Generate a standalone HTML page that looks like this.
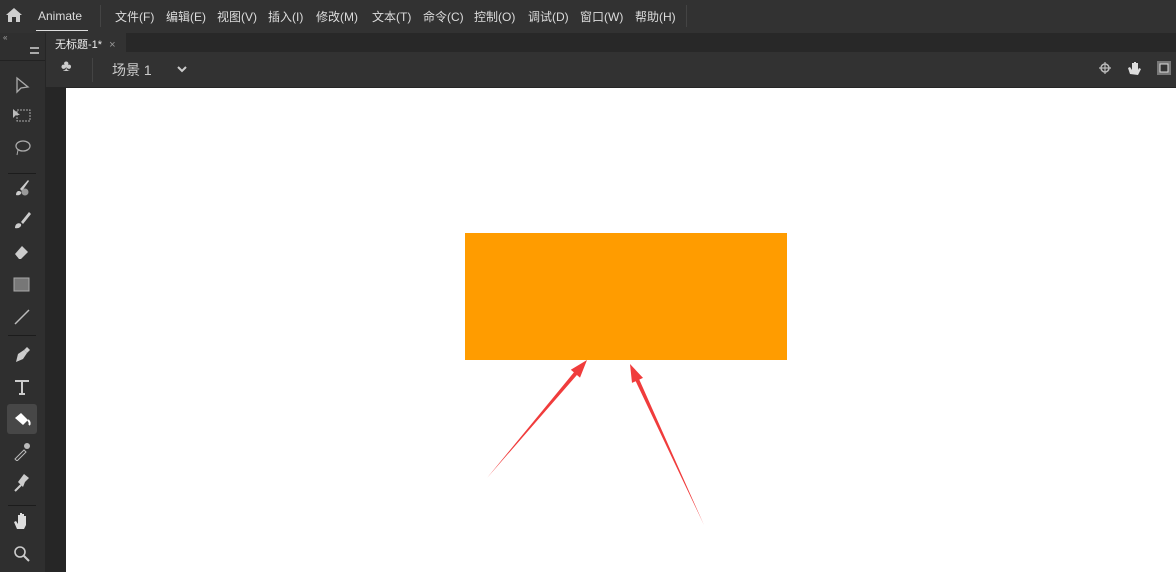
<!DOCTYPE html>
<html><head><meta charset="utf-8"><style>
*{margin:0;padding:0;box-sizing:border-box}
body{width:1176px;height:572px;overflow:hidden;background:#262626;font-family:"Liberation Sans","Noto Sans CJK SC",sans-serif;position:relative;color:#ddd}
.menu{position:absolute;left:0;top:0;width:1176px;height:33px;background:#323232;font-size:12px}
.menu span{position:absolute;top:8px;color:#dcdcdc}
.tabs{position:absolute;left:46px;top:33px;width:1130px;height:19px;background:#282828}
.tab{position:absolute;left:0;top:0;width:80px;height:19px;background:#323232;font-size:11px;color:#eee;padding:3px 9px}
.scene{position:absolute;left:46px;top:52px;width:1130px;height:35px;background:#323232}
.left{position:absolute;left:0;top:33px;width:45px;height:539px;background:#2f2f2f}
.stage{position:absolute;left:66px;top:88px;width:1110px;height:484px;background:#fff}
.ic{position:absolute;left:12px;width:20px;height:20px}
.sep{position:absolute;left:8px;width:28px;height:1px;background:#1c1c1c}
</style></head><body>
<div class="menu">
<svg style="position:absolute;left:5px;top:7px" width="18" height="16" viewBox="0 0 18 16"><path d="M9 1L1 8h2v7h4v-5h4v5h4V8h2z" fill="#cfcfcf"/></svg>
<span style="left:38px;top:9px">Animate</span>
<div style="position:absolute;left:36px;top:30px;width:52px;height:1px;background:#ddd"></div>
<div style="position:absolute;left:100px;top:5px;width:1px;height:22px;background:#444"></div>
<span style="left:115px">文件(F)</span><span style="left:166px">编辑(E)</span><span style="left:217px">视图(V)</span><span style="left:268px">插入(I)</span><span style="left:316px">修改(M)</span><span style="left:372px">文本(T)</span><span style="left:423px">命令(C)</span><span style="left:474px">控制(O)</span><span style="left:528px">调试(D)</span><span style="left:580px">窗口(W)</span><span style="left:635px">帮助(H)</span>
<div style="position:absolute;left:686px;top:5px;width:1px;height:22px;background:#444"></div>
</div>
<div class="tabs"><div class="tab">无标题-1* <span style="color:#999;margin-left:4px">×</span></div></div>
<div class="scene">
<span style="position:absolute;left:15px;top:6px;font-size:16px;color:#ccc">♣</span>
<div style="position:absolute;left:46px;top:6px;width:1px;height:24px;background:#444"></div>
<span style="position:absolute;left:66px;top:8px;font-size:14px;color:#ccc">场景 1</span>
<svg style="position:absolute;left:130px;top:12px" width="12" height="10"><path d="M2 3l4 4 4-4" stroke="#ccc" stroke-width="2" fill="none"/></svg>
<svg style="position:absolute;left:1052px;top:9px" width="14" height="14"><circle cx="7" cy="7" r="4" stroke="#bbb" fill="none" stroke-width="1.5"/><path d="M7 1v12M1 7h12" stroke="#bbb" stroke-width="1.2"/></svg>
<svg style="position:absolute;left:1080px;top:8px" width="18" height="16"><path d="M4 14l-2-6 2-1 2 3V3l2 0v6V2h2v7V3h2v7l1-2 2 1-3 6z" fill="#ddd"/></svg>
<svg style="position:absolute;left:1110px;top:8px" width="16" height="16"><rect x="1" y="1" width="14" height="14" fill="#777"/><rect x="4" y="4" width="8" height="8" fill="#333" stroke="#ddd"/></svg>
</div>
<div class="left">
<span style="position:absolute;left:3px;top:0px;font-size:8px;color:#aaa">«</span>
<div style="position:absolute;left:30px;top:14px;width:9px;height:7px;border-top:2px solid #aaa;border-bottom:2px solid #aaa"></div>
<div style="position:absolute;left:0;top:27px;width:45px;height:1px;background:#222"></div>
<svg class="ic" style="top:42px" viewBox="0 0 20 20"><path d="M5 3v14l4-4 7-1z" stroke="#aaa" fill="none" stroke-width="1.3"/></svg>
<svg class="ic" style="top:73px" viewBox="0 0 20 20"><rect x="5" y="4" width="13" height="11" stroke="#aaa" fill="none" stroke-dasharray="2 1"/><path d="M1 3v9l3-3 4 0z" fill="#bbb"/></svg>
<svg class="ic" style="top:105px" viewBox="0 0 20 20"><ellipse cx="11" cy="8" rx="7" ry="5" stroke="#aaa" fill="none" stroke-width="1.3"/><path d="M6 12l-1 5" stroke="#aaa"/></svg>
<div class="sep" style="top:140px"></div>
<svg class="ic" style="top:145px" viewBox="0 0 20 20"><path d="M16 2l-8 9 2 2 7-10z" fill="#ccc"/><path d="M4 17c0-4 3-5 5-3 1 2-2 4-5 3z" fill="#ccc"/><circle cx="13" cy="14" r="3.5" fill="#999"/></svg>
<svg class="ic" style="top:177px" viewBox="0 0 20 20"><path d="M17 2l-8 10 2 2 8-10z" fill="#ccc"/><path d="M3 18c0-4 3-6 6-4 1 3-3 5-6 4z" fill="#ccc"/></svg>
<svg class="ic" style="top:209px" viewBox="0 0 20 20"><path d="M3 12l7-8 6 6-7 7H7z" fill="#ccc"/></svg>
<svg class="ic" style="top:241px" viewBox="0 0 20 20"><rect x="2" y="4" width="15" height="13" fill="#777" stroke="#aaa"/></svg>
<svg class="ic" style="top:273px" viewBox="0 0 20 20"><path d="M3 18L17 4" stroke="#bbb" stroke-width="1.5"/></svg>
<div class="sep" style="top:302px"></div>
<svg class="ic" style="top:312px" viewBox="0 0 20 20"><path d="M4 17l2-8 6-4 3 3-4 6z" fill="#ccc"/><path d="M12 5l3-3 3 3-3 3" fill="#ccc"/></svg>
<svg class="ic" style="top:344px" viewBox="0 0 20 20"><path d="M3 4h14M10 4v13M7 17h6" stroke="#ccc" stroke-width="2"/></svg>
<div style="position:absolute;left:7px;top:371px;width:30px;height:30px;background:#474747;border-radius:3px"></div>
<svg class="ic" style="top:376px" viewBox="0 0 20 20"><path d="M3 9l6-5 7 7-5 5z" fill="#fff"/><path d="M16 11c2 2 2 4 1 5" stroke="#fff" stroke-width="2" fill="none"/></svg>
<svg class="ic" style="top:408px" viewBox="0 0 20 20"><path d="M3 18l9-9 2 2-9 9z" stroke="#bbb" fill="none"/><circle cx="15" cy="5" r="3" fill="#bbb"/></svg>
<svg class="ic" style="top:440px" viewBox="0 0 20 20"><path d="M3 18l6-6" stroke="#ccc" stroke-width="2"/><path d="M6 9l5 5 2-5 4-4-5-4-3 4z" fill="#ccc"/></svg>
<div class="sep" style="top:472px"></div>
<svg class="ic" style="top:478px" viewBox="0 0 20 20"><path d="M5 18l-3-7 2-1 2 3V4h2v6V2h2v8V3h2v7V5h2v9l-2 4z" fill="#ddd"/></svg>
<svg class="ic" style="top:511px" viewBox="0 0 20 20"><circle cx="8" cy="8" r="5" stroke="#ccc" stroke-width="1.6" fill="none"/><path d="M12 12l5 5" stroke="#ccc" stroke-width="2"/></svg>
</div>
<div class="stage"></div>
<div style="position:absolute;left:465px;top:233px;width:322px;height:127px;background:#ff9c00"></div>
<svg style="position:absolute;left:0;top:0" width="1176" height="572">
<path d="M587 360L570.8 369.8 573.9 372.4 487 478 576.9 375 580 377.6z" fill="#f03c3c"/>
<path d="M630 364L632 382.9 635.7 381.2 704 525 639.3 379.6 643 377.9z" fill="#f03c3c"/>
</svg>
</body></html>
